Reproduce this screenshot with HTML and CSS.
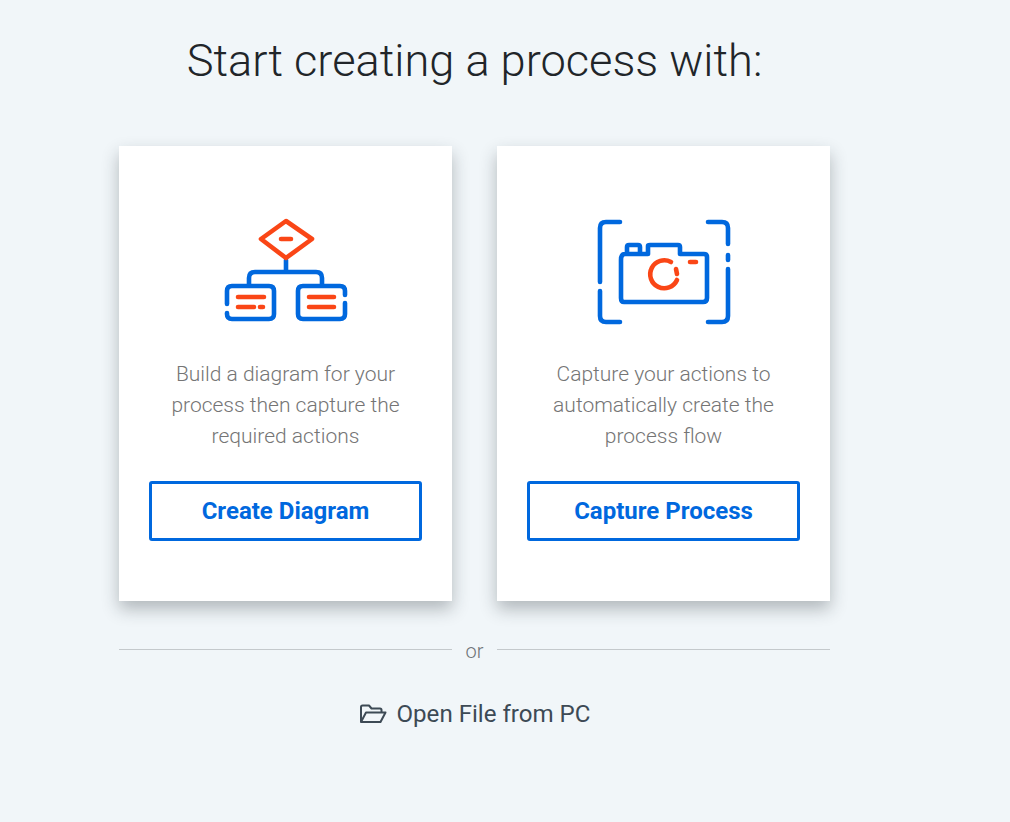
FILE: index.html
```html
<!DOCTYPE html>
<html lang="en">
<head>
<meta charset="utf-8">
<title>Start creating a process</title>
<link rel="stylesheet" href="styles.css">
</head>
<body>
<main class="page">
  <h1 class="title">Start creating a process with:</h1>
  <section class="cards">
    <article class="card">
      <svg class="icon" viewBox="210 205 151 130" fill="none" stroke-width="4.6" stroke-linecap="round" stroke-linejoin="round">
        <path class="blue" d="M286 260V272M249 284V278Q249 272 255 272H316Q322 272 322 278V284"/>
        <path class="blue" d="M227 304V291Q227 286 232 286H269Q274 286 274 291V314Q274 319 269 319H232Q227 319 227 314V313"/>
        <path class="blue" d="M345 295V291Q345 286 340 286H303Q298 286 298 291V314Q298 319 303 319H340Q345 319 345 314V303"/>
        <path class="red" d="M286 221L312 239L286 258L261 239Z"/>
        <path class="red" d="M281 239H291M238 297H264M238 307H254M260 307H263M309 297H334M309 307H334"/>
      </svg>
      <p class="text">Build a diagram for your process then capture the required actions</p>
      <a class="btn" href="#">Create Diagram</a>
    </article>
    <article class="card">
      <svg class="icon" viewBox="588 205 151 130" fill="none" stroke-width="4.6" stroke-linecap="round" stroke-linejoin="round">
        <path class="blue" d="M620 222H606Q600 222 600 228V282M600 291V316Q600 322 606 322H620M708 222H722Q728 222 728 228V244M728 255V260M728 269V316Q728 322 722 322H708"/>
        <path class="blue" d="M627 254V247Q627 245 629 245H638Q640 245 640 247V254M621 260Q621 254 625 254H648V246Q648 245 650 245H678Q680 245 680 247V254H704Q707 254 707 257V298Q707 302 703 302H624Q621 302 621 298Z"/>
        <path class="red" d="M671 262A14 14 0 1 0 677 280M676 269L677 274M690 262H696"/>
      </svg>
      <p class="text">Capture your actions to automatically create the process flow</p>
      <a class="btn" href="#">Capture Process</a>
    </article>
  </section>
  <div class="divider"><span class="rule"></span><span class="or">or</span><span class="rule"></span></div>
  <a class="open" href="#">
    <svg class="folder" viewBox="1 0 27 20" fill="none" stroke-width="2" stroke-linejoin="round" stroke-linecap="round">
      <path d="M2 18V3Q2 1.500 3.500 1.500H10L12.500 4.500H21Q22.500 4.500 22.500 6V8.500M2 18H21.500L26.500 8.500H7L2 18Z"/>
    </svg>
    <span>Open File from PC</span>
  </a>
</main>
</body>
</html>
```
FILE: styles.css
```css
* { box-sizing: border-box; }
html, body { margin: 0; height: 100%; }
body {
  background: #f1f6f9;
  font-family: Roboto, "Noto Sans", sans-serif;
  overflow: hidden;
}
.page {
  width: 711px;
  margin-left: 119px;
  display: flex;
  flex-direction: column;
}
.title {
  margin: 34px -119px 0;
  font-size: 45.2px;
  font-weight: 300;
  line-height: 54px;
  color: #212529;
  text-align: center;
}
.cards {
  display: flex;
  gap: 45px;
  margin-top: 58px;
}
.card {
  width: 333px;
  height: 455px;
  padding: 59px 30px 0;
  background: #fff;
  box-shadow: 0 8px 16px rgba(30, 40, 45, .3);
  display: flex;
  flex-direction: column;
  align-items: center;
}
.icon { width: 151px; height: 130px; flex: none; }
.blue { stroke: #0068de; }
.red { stroke: #fa4616; }
.text {
  margin: 24px 0 0;
  width: 250px;
  font-size: 21px;
  font-weight: 300;
  line-height: 31px;
  color: #757575;
  text-align: center;
}
.btn {
  margin-top: 29px;
  width: 273px;
  height: 60px;
  border: 3px solid #0068de;
  border-radius: 3px;
  display: flex;
  align-items: center;
  justify-content: center;
  font-size: 24px;
  font-weight: 700;
  color: #0068de;
  text-decoration: none;
}
.divider {
  display: flex;
  align-items: center;
  gap: 14px;
  margin-top: 36px;
  height: 28px;
}
.rule { flex: 1; height: 1px; background: #c4c9cc; margin-top: -3px; }
.or { font-size: 20px; font-weight: 300; color: #6f7478; }
.open {
  display: flex;
  align-items: center;
  justify-content: center;
  gap: 9px;
  margin-top: 35px;
  font-size: 24.1px;
  color: #3d4a55;
  text-decoration: none;
}
.folder { width: 29px; height: 20px; stroke: #3d4a55; }
```
